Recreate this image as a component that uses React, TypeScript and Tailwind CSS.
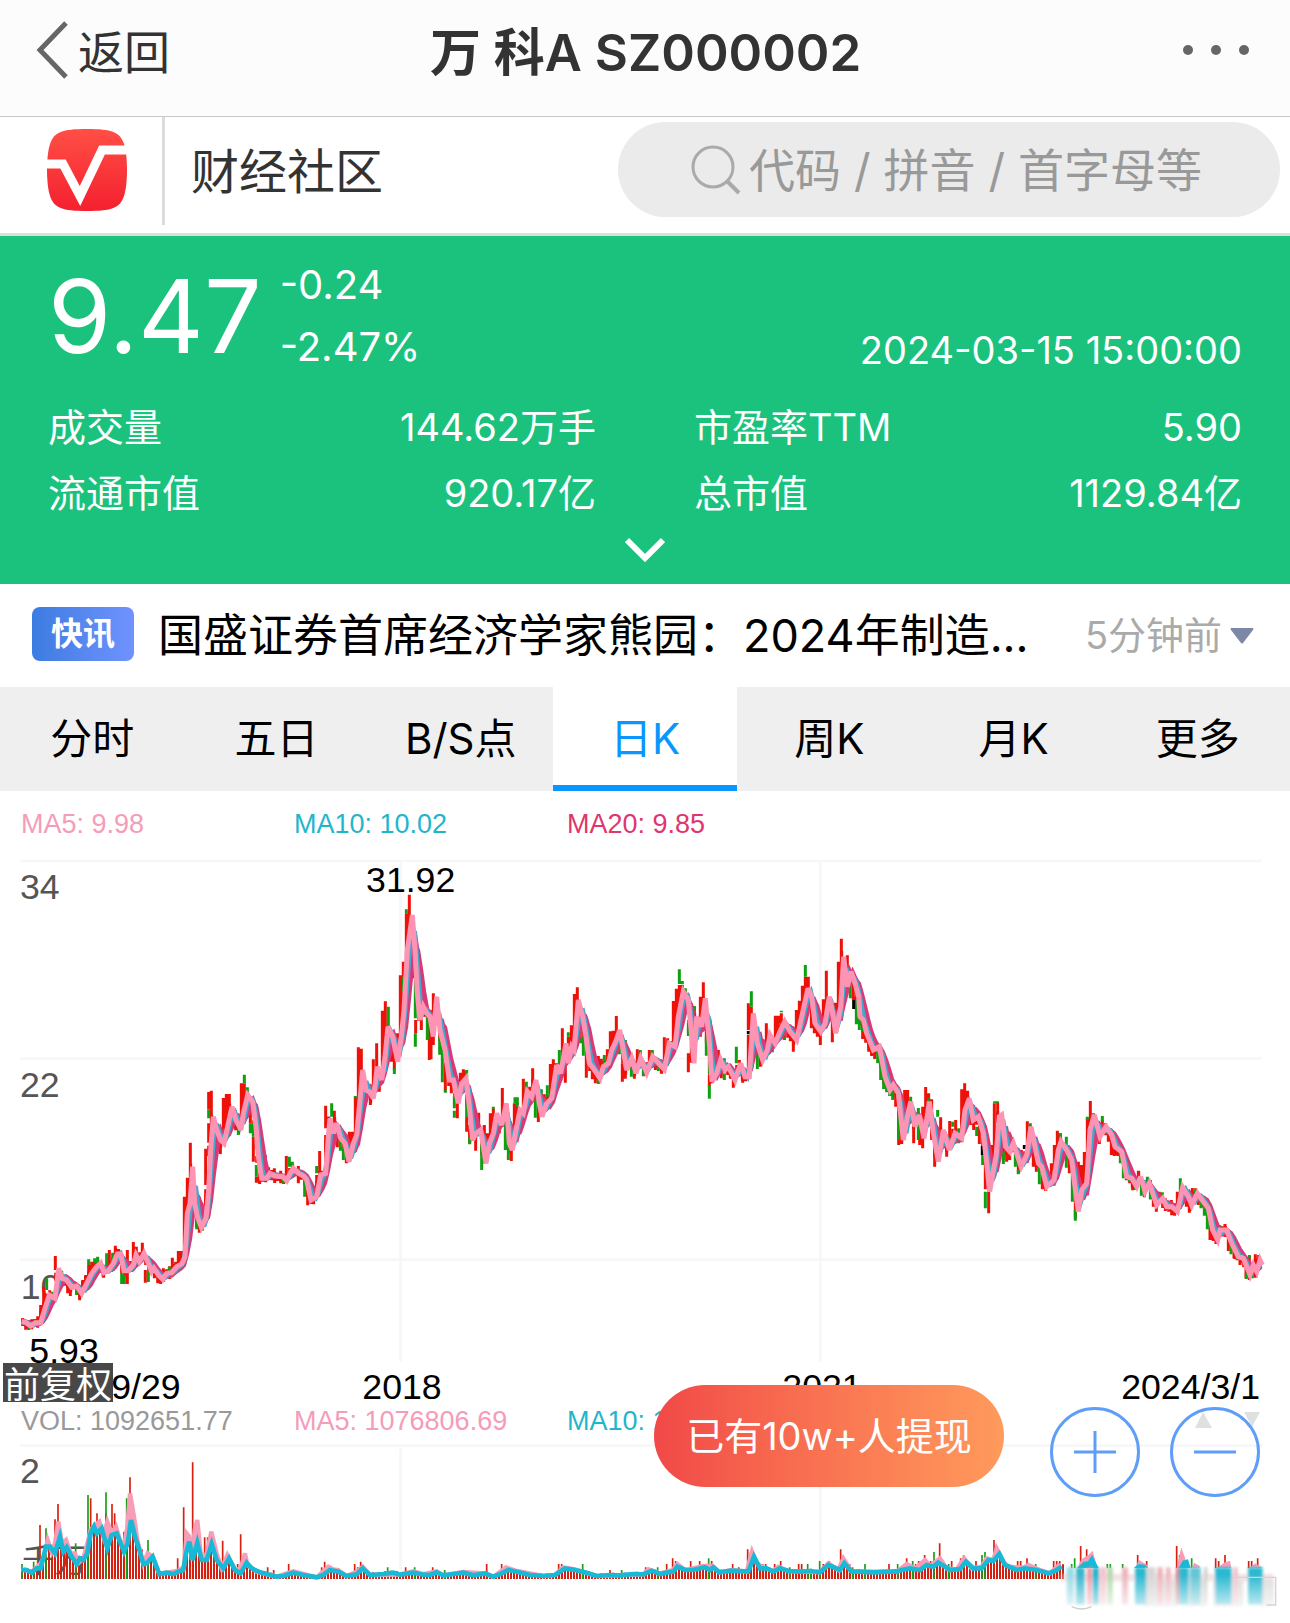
import { useState } from 'react';

type Point = [number, number];
type Bar = [number, number, number];

const SEGMENT_WIDTH = 1290;
const STEP = 9;
const VOLUME_BASE = 717;

// Each string covers one third of the time axis, x is relative to that third
function parse(segments: string[]): number[][] {
  return segments.flatMap((s, i) =>
    s.trim().split(/\s+/).map(item => {
      const [x, ...rest] = item.split(',').map(Number);
      return [x + i * SEGMENT_WIDTH, ...rest];
    })
  );
}

const priceLine = parse([
  '65,1415 78,1418 92,1428 106,1418 122,1418 135,1375 148,1335 165,1345 176,1255 186,1285 200,1290 215,1312 230,1308 245,1330 260,1300 275,1270 290,1250 302,1240 312,1268 325,1262 340,1240 352,1212 362,1212 372,1262 385,1262 400,1245 408,1215 418,1235 432,1210 445,1240 455,1265 462,1255 475,1275 488,1288 500,1270 515,1268 530,1250 545,1242 555,1220 562,1090 570,1060 578,950 584,1060 592,1100 604,1132 618,1105 626,1020 632,900 640,800 650,840 662,870 672,880 685,820 696,770 708,810 723,840 730,790 743,735 758,755 768,830 775,920 785,985 800,985 810,970 825,978 848,980 860,992 870,970 880,955 895,970 910,978 920,990 933,1050 950,1040 962,975 977,970 985,860 990,805 1000,850 1010,820 1022,865 1035,880 1047,935 1060,880 1070,855 1080,750 1088,660 1098,720 1108,725 1120,745 1132,650 1145,690 1155,620 1164,530 1178,560 1193,635 1204,560 1212,480 1222,300 1237,195 1245,300 1252,430 1260,510 1270,470 1280,490',
  '0,500 10,560 20,440 30,540 45,600 58,690 70,690 85,760 95,700 108,685 118,770 128,870 138,850 152,840 168,940 178,880 190,850 200,790 215,825 229,760 238,880 247,900 258,840 270,780 280,790 292,725 305,740 318,690 328,760 336,800 350,760 365,745 380,645 392,670 408,580 415,640 425,590 432,600 445,450 458,500 468,560 478,640 490,655 510,685 520,650 535,640 545,600 557,575 569,540 578,590 590,660 605,625 618,670 632,625 650,668 668,620 690,645 703,658 718,580 735,590 745,500 760,425 775,450 785,560 792,640 800,500 815,530 826,445 838,580 846,695 860,670 872,630 885,660 895,650 915,690 932,640 945,680 958,680 970,490 982,580 998,630 1012,600 1020,555 1035,580 1052,540 1064,515 1080,545 1100,570 1115,500 1134,415 1145,440 1155,520 1172,545 1185,520 1198,440 1208,490 1217,550 1232,470 1241,320 1252,410 1263,365 1275,400 1286,440',
  '0,500 10,510 20,550 40,600 58,590 75,680 90,720 100,705 115,730 130,870 142,800 152,755 165,830 178,795 192,865 208,755 220,850 235,935 250,840 268,900 285,850 305,865 315,780 328,745 340,810 355,800 370,850 380,940 389,1025 400,960 408,920 418,800 425,795 437,890 450,905 460,880 483,950 500,915 513,830 525,890 535,940 545,950 560,1010 582,990 595,900 603,875 620,900 635,930 645,1010 655,1085 665,1020 680,1000 690,840 703,795 720,860 738,830 755,855 765,890 785,905 800,980 815,985 830,1010 842,980 855,1025 868,1000 890,1065 908,1045 920,1070 935,1070 952,1085 968,1012 985,1040 995,1065 1012,1030 1030,1055 1045,1075 1058,1140 1073,1170 1080,1140 1100,1140 1115,1180 1135,1220 1150,1225 1170,1275 1180,1245 1190,1265 1200,1230 1207,1245',
]) as Point[];

const upCandles = parse([
  '68,1405,1425 122,1365,1425 131,1310,1390 149,1325,1360 166,1218,1260 203,1290,1330 211,1290,1338 239,1310,1345 248,1290,1320 257,1275,1320 266,1245,1290 275,1235,1280 284,1235,1270 309,1250,1280 328,1200,1260 346,1187,1240 382,1200,1302 400,1176,1240 409,1190,1250 427,1178,1230 436,1260,1298 463,1250,1285 482,1270,1298 490,1255,1280 517,1223,1265 535,1203,1240 544,1203,1240 553,1040,1220 562,983,1150 571,878,1090 598,1100,1148 617,896,1005 617,1018,1100 626,726,778 626,820,878 634,722,960 661,860,912 670,744,870 679,732,850 688,732,800 706,780,835 724,700,840 733,700,790 751,780,820 760,860,935 769,980,998 778,980,1000 796,915,980 823,955,975 859,918,980 895,948,1000 923,1020,1066 950,975,1030 959,903,1010 977,767,835 977,855,960 986,800,900 1003,782,850 1012,850,892 1039,900,940 1048,845,910 1057,845,890 1066,740,870 1075,592,820 1084,596,760 1111,720,765 1120,628,740 1130,580,680 1138,680,725 1147,482,690 1156,454,640 1174,560,635 1183,600,660 1192,550,620 1201,376,600 1210,335,520 1219,190,430 1228,134,330 1238,300,385 1247,510,550 1264,500,540 1273,440,500 1288,480,630',
  '3,480,628 10,430,585 46,640,725 64,700,730 82,740,805 91,668,740 100,658,720 108,662,690 110,800,845 119,840,880 137,850,902 146,788,850 163,825,940 172,850,890 181,790,880 190,775,860 208,800,850 217,714,830 244,830,933 253,760,870 262,760,830 280,686,780 299,710,745 308,655,740 325,760,816 343,733,780 361,642,740 370,628,700 379,640,700 388,650,700 397,535,630 406,600,698 415,560,600 424,526,590 433,432,610 442,412,560 469,540,683 487,650,688 496,660,700 505,618,690 514,626,670 532,598,650 541,544,640 550,542,600 559,498,580 577,640,695 586,650,686 613,650,686 622,598,650 649,640,670 658,600,650 676,640,660 694,645,670 703,562,640 730,453,590 739,416,560 748,405,500 757,405,430 775,610,667 784,560,635 793,470,560 811,440,560 820,397,500 829,470,580 838,675,710 847,640,700 865,600,640 874,640,685 901,650,685 910,670,713 928,630,660 937,670,692 955,460,540 955,555,680 964,470,600 991,600,650 1009,520,600 1036,497,570 1045,497,550 1054,490,520 1063,530,570 1081,540,574 1090,560,605 1099,480,560 1108,452,530 1117,407,500 1126,380,460 1135,380,430 1144,470,535 1153,520,550 1162,530,560 1171,540,585 1180,448,540 1189,362,500 1198,440,480 1207,500,577 1216,458,530 1225,335,500 1234,266,450 1252,316,420 1270,400,450 1279,440,480',
  '8,520,567 17,520,567 26,560,605 35,580,615 44,590,627 107,730,770 116,780,885 125,800,882 134,720,850 143,720,780 161,790,880 179,820,885 188,770,895 197,711,850 206,730,780 215,748,870 224,860,950 242,802,870 260,860,920 269,813,880 287,810,850 305,718,877 314,700,800 323,722,760 332,760,825 341,766,840 358,830,882 376,930,1018 386,1020,1090 394,885,980 403,760,950 413,757,820 430,860,930 440,830,935 449,850,930 475,920,970 484,900,955 502,814,900 520,860,950 529,900,965 547,960,1018 556,970,1018 574,940,990 583,885,960 592,842,930 601,850,890 628,930,970 646,1040,1105 655,935,1070 664,945,1030 673,906,1010 682,805,960 691,753,880 718,830,882 727,810,850 745,840,875 754,860,915 763,870,918 772,880,915 799,960,990 817,980,1015 835,963,1000 853,990,1042 871,990,1020 880,1030,1070 889,1040,1085 898,1025,1060 916,1045,1083 934,1050,1083 943,1060,1085 952,1025,1085 979,1030,1070 988,1040,1088 997,1014,1060 1015,1030,1065 1050,1110,1170 1059,1140,1172 1068,1150,1182 1086,1130,1150 1095,1122,1160 1105,1150,1203 1122,1190,1225 1140,1210,1245 1158,1230,1285 1168,1218,1290 1186,1213,1283 1195,1225,1250',
]) as Bar[];

const downCandles = parse([
  '86,1415,1440 104,1408,1420 140,1285,1320 158,1325,1350 185,1262,1290 230,1310,1335 266,1228,1245 284,1225,1240 293,1220,1240 320,1210,1260 338,1208,1240 365,1270,1302 373,1275,1302 445,1262,1296 454,1230,1250 508,1250,1262 590,1080,1138 607,1110,1142 626,778,805 652,822,850 715,830,855 733,674,700 742,712,740 751,820,850 760,820,860 769,945,980 796,970,990 850,980,998 868,920,950 877,935,955 914,990,1040 950,948,970 995,760,800 1021,860,902 1030,890,930 1066,738,745 1165,470,530 1183,655,672 1219,178,190 1210,380,425 1246,350,505 1246,550,590 1282,490,570',
  '29,560,614 37,590,697 46,720,728 73,740,775 73,782,803 110,660,680 110,750,803 119,860,883 155,850,960 190,770,776 226,820,900 235,850,930 255,742,760 262,742,770 289,695,730 316,740,803 334,718,760 352,706,740 388,600,650 415,547,560 451,540,580 460,560,617 505,690,702 523,615,640 568,560,613 586,570,610 604,640,680 631,600,625 640,655,678 667,600,620 685,645,663 748,358,402 757,393,403 766,415,440 775,520,558 793,468,480 829,560,617 838,620,672 838,705,746 883,625,660 883,670,690 919,590,640 946,670,690 964,424,470 982,600,657 1027,580,607 1054,482,487 1072,525,550 1063,560,570 1126,345,380 1261,380,445 1279,450,523 1288,500,540',
  '8,530,545 53,600,640 62,620,690 71,660,717 80,690,727 89,700,738 98,710,750 116,760,870 152,740,760 175,774,870 206,745,760 233,780,800 278,815,830 296,835,880 350,830,858 368,860,945 376,1025,1075 404,754,760 412,754,760 430,905,942 457,862,890 466,910,950 475,960,973 511,820,840 538,930,1003 565,965,985 601,850,870 619,860,953 637,940,1055 646,1080,1112 682,800,810 700,790,810 727,798,815 781,900,940 790,920,985 808,970,995 826,1000,1020 844,990,1037 862,980,1000 871,1000,1048 907,1027,1040 925,1055,1080 961,985,1030 1006,1018,1040 1023,1040,1075 1033,1060,1097 1042,1070,1138 1077,1128,1150 1113,1180,1213 1131,1205,1230 1168,1215,1225 1159,1270,1287 1177,1255,1285',
]) as Bar[];

const flatCandles: Bar[] = [[339, 1240, 1262], [2245, 543, 553], [2561, 450, 477], [2947, 888, 915], [3073, 885, 897]];

const volumeMa10 = parse([
  '65,690 80,690 95,698 110,685 122,685 138,620 150,620 165,640 180,590 190,635 200,622 215,650 230,672 240,655 250,660 262,640 272,580 282,560 290,580 305,565 322,625 335,585 350,580 372,635 383,610 393,540 405,590 418,630 430,672 440,670 458,650 478,702 500,698 520,702 535,695 550,690 558,640 568,605 578,660 592,608 605,660 620,660 635,612 650,660 670,685 687,655 705,690 722,700 740,668 755,685 775,695 800,702 830,710 850,708 880,698 910,705 950,712 970,705 990,690 1015,695 1040,708 1070,703 1088,685 1110,705 1150,702 1180,698 1200,704 1240,698 1270,704',
  '0,705 20,697 40,706 70,702 100,698 130,706 165,700 190,710 215,700 235,690 260,695 300,705 340,708 375,705 405,685 435,690 470,698 500,708 540,705 570,706 610,702 640,703 665,692 690,702 710,698 730,695 742,680 765,690 790,690 825,682 840,690 850,682 868,697 905,692 955,695 972,650 990,685 1010,685 1030,695 1050,685 1075,693 1110,695 1140,693 1170,697 1195,675 1230,690 1243,670 1265,695',
  '0,695 40,697 90,695 110,695 125,690 150,685 180,690 200,675 220,680 235,668 255,680 270,690 300,687 318,665 340,685 365,685 385,660 400,663 418,642 435,675 470,690 495,685 530,690 565,700 585,693 605,680',
]) as Point[];

const volumeMa5 = parse([
  '65,688 95,695 110,682 122,670 132,650 143,600 155,635 165,610 175,545 186,610 198,600 212,640 225,640 235,670 250,655 262,610 272,570 285,555 298,545 310,590 322,545 335,580 348,560 360,600 372,620 382,560 390,460 402,530 412,600 430,670 443,640 458,650 478,702 535,692 552,680 560,580 568,590 576,660 584,570 592,540 602,640 618,650 634,575 650,640 665,685 682,645 705,690 722,685 735,640 742,675 770,695 830,710 880,694 950,712 975,690 985,680 1000,688 1015,690 1040,708 1070,695 1088,680 1110,705 1200,704 1240,694 1270,702',
  '20,694 40,706 100,696 165,700 190,710 228,682 260,693 340,708 375,705 400,682 435,688 500,708 640,703 655,688 690,700 728,690 742,672 765,690 820,678 848,678 868,697 905,690 950,695 966,635 980,670 1000,682 1030,693 1045,680 1075,693 1170,697 1195,670 1225,690 1240,655 1265,695',
  '0,695 110,695 140,672 165,685 195,660 210,678 240,655 260,685 290,688 312,655 335,685 365,680 380,655 400,660 410,625 430,665 445,680 490,683 505,675 540,690 570,700 600,672',
]) as Point[];

const upVolume = parse([
  '120,555 165,538 174,492 272,475 291,520 318,520 336,492 344,520 372,575 390,412 426,628 533,655 551,502 578,367 614,592 623,592 632,575 668,602 713,672 722,583 803,682 821,690 866,672 965,682 974,665 1064,672 1073,682 1082,665 1217,682',
  '8,682 170,672 215,672 386,672 395,672 432,682 540,690 647,682 710,672 728,655 737,663 782,663 809,663 845,663 908,672 926,682 953,628 962,636 998,672 1007,672 1034,672 1052,663 1106,672 1115,672 1180,672 1198,663 1232,628 1259,672',
  '87,672 140,655 167,672 176,663 185,663 194,645 212,663 239,610 275,663 302,655 311,645 348,663 402,600 473,663 482,663 501,655 581,663 590,663 599,663 662,618 680,628 833,645 860,663 950,618 1067,655 1076,663 1095,645 1166,663 1175,663 1193,655',
]) as Point[];

const downVolume = parse([
  '66,672 101,665 138,565 227,610 264,465 318,457 380,475 444,600 1163,682 1244,682',
  '44,690 458,672 575,690 683,682 836,655 1079,682 1133,672 1142,690 1169,663 1268,682',
  '15,672 113,672 158,663 222,636 266,672 366,645 375,636 527,672 635,672 644,655 742,672 751,672 788,672 959,645 995,655',
]) as Point[];

function valueAt(points: Point[], x: number) {
  const i = points.findIndex(p => p[0] >= x);
  if (i < 0) return points[points.length - 1][1];
  if (i === 0) return points[0][1];
  const [x0, y0] = points[i - 1];
  const [x1, y1] = points[i];
  return y0 + ((y1 - y0) * (x - x0)) / (x1 - x0);
}

function toLine(points: Point[]) {
  return 'M' + points.map(([x, y]) => `${x} ${y.toFixed(0)}`).join('L');
}

function toBars(bars: Bar[]) {
  return bars.map(([x, top, bottom]) => `M${x} ${top.toFixed(0)}V${bottom.toFixed(0)}`).join('');
}

function trailingAverage(points: Point[], count: number): Point[] {
  const out: Point[] = [];
  for (let x = points[0][0]; x <= points[points.length - 1][0]; x += STEP) {
    let sum = 0;
    for (let k = 0; k < count; k++) sum += valueAt(points, x - k * STEP);
    out.push([x, sum / count]);
  }
  return out;
}

const bodies: Bar[] = [];
for (let x = 68; x < 3780; x += STEP) {
  const y = valueAt(priceLine, x + 6);
  bodies.push([x, y - 9 - ((x * 7) % 11), y + 9 + ((x * 5) % 13)]);
}

const volumeBodies: Bar[] = [];
for (let x = 66; x < 3190; x += STEP) {
  volumeBodies.push([x, valueAt(volumeMa10, x) - ((x * 7) % 14), VOLUME_BASE]);
}

// Area between the two volume averages
const volumeBand = toLine([...volumeMa5, ...[...volumeMa10].reverse()]) + 'Z';

const smudges = [
  { x: 3200, w: 22, c: '#9adbe6' }, { x: 3228, w: 26, c: '#38b7ce' }, { x: 3262, w: 12, c: '#ef8e98' },
  { x: 3277, w: 20, c: '#28b5cd' }, { x: 3300, w: 18, c: '#f5c3cc' }, { x: 3322, w: 16, c: '#b4d8ae' },
  { x: 3366, w: 18, c: '#edb6bf' }, { x: 3405, w: 34, c: '#2cb9d1' }, { x: 3440, w: 26, c: '#d5d5d5' },
  { x: 3472, w: 16, c: '#eeb0ba' }, { x: 3498, w: 14, c: '#efb7c0' }, { x: 3528, w: 8, c: '#e26a70' },
  { x: 3536, w: 30, c: '#2cb9d1' }, { x: 3570, w: 32, c: '#63c6d6' }, { x: 3612, w: 10, c: '#d0d0d0' },
  { x: 3645, w: 50, c: '#2cb9d1' }, { x: 3700, w: 14, c: '#f1c4cc' }, { x: 3744, w: 44, c: '#2cb9d1' },
];

const stats = [
  { label: '成交量', value: '144.62万手' },
  { label: '市盈率TTM', value: '5.90' },
  { label: '流通市值', value: '920.17亿' },
  { label: '总市值', value: '1129.84亿' },
];

const tabs = ['分时', '五日', 'B/S点', '日K', '周K', '月K', '更多'];

function Header() {
  return (
    <header className="h-[117px] bg-[#fcfcfc] border-b border-[#c8c8c8] grid grid-cols-3 items-center pb-3">
      <button className="flex items-center gap-[10px] pl-9 pb-1 text-[46px] leading-none text-[#333]">
        <svg className="w-8 h-[60px]" viewBox="0 0 32 60" fill="none" stroke="#666" strokeWidth="5">
          <path d="M30 3L4 30l26 27" />
        </svg>
        <span className="pt-1">返回</span>
      </button>
      <h1 className="text-[51px] leading-none font-semibold text-[#333] text-center whitespace-nowrap">万 科A SZ000002</h1>
      <button aria-label="更多操作" className="justify-self-end mr-10 pb-1">
        <svg className="w-[68px] h-3" viewBox="0 0 68 12" fill="#666">
          <circle cx="6" cy="6" r="5" />
          <circle cx="34" cy="6" r="5" />
          <circle cx="62" cy="6" r="5" />
        </svg>
      </button>
    </header>
  );
}

function Logo() {
  return (
    <svg className="w-[82px] h-[82px]" viewBox="0 0 82 82">
      <defs>
        <linearGradient id="logo" x1="0" y1="0" x2="0" y2="1">
          <stop offset="0" stopColor="#ff4f45" />
          <stop offset="1" stopColor="#f4202f" />
        </linearGradient>
      </defs>
      <path d="M41 0C66 0 74 3 78 15C82 27 82 55 78 67C74 79 66 82 41 82S8 79 4 67C0 55 0 27 4 15C8 3 16 0 41 0Z" fill="url(#logo)" />
      <path d="M1 35H17L34 67L56 21H80" fill="none" stroke="#fff" strokeWidth="9" strokeMiterlimit="10" />
    </svg>
  );
}

function SearchRow() {
  return (
    <div className="h-[119px] bg-white border-b-[3px] border-[#ddd] flex items-start">
      <a href="#" className="pl-[46px] pt-3 pr-[34px] shrink-0" aria-label="首页"><Logo /></a>
      <div className="w-[3px] h-[108px] bg-[#dcdcdc] shrink-0" />
      <span className="pl-[26px] h-[108px] leading-[110px] text-[48px] text-[#333] whitespace-nowrap">财经社区</span>
      <label className="ml-auto mr-[10px] mt-[5px] w-[662px] h-[95px] rounded-full bg-[#ebebeb] flex items-center gap-2 pl-[73px]">
        <svg className="w-[50px] h-[50px] shrink-0" viewBox="0 0 50 50" fill="none" stroke="#aaa" strokeWidth="3">
          <circle cx="22" cy="22" r="20" />
          <path d="M36 36l12 12" strokeWidth="4" />
        </svg>
        <input
          type="text"
          aria-label="搜索"
          placeholder="代码 / 拼音 / 首字母等"
          className="flex-1 min-w-0 pt-[2px] bg-transparent outline-none text-[46px] text-[#333] placeholder:text-[#999]"
        />
      </label>
    </div>
  );
}

function Quote() {
  return (
    <section className="h-[348px] bg-[#1bc27d] text-white px-12 pt-[18px] text-[38px]">
      <div className="flex h-[140px]">
        <span className="text-[102px] leading-[124px]">9.47</span>
        <div className="flex flex-col ml-[18px] text-[40px] leading-[62px]">
          <span>-0.24</span>
          <span>-2.47%</span>
        </div>
        <time className="ml-auto pt-[66px] leading-[60px]">2024-03-15 15:00:00</time>
      </div>
      <dl className="grid grid-cols-2 gap-x-[98px]">
        {stats.map(s => (
          <div key={s.label} className="flex justify-between leading-[66px]">
            <dt>{s.label}</dt>
            <dd>{s.value}</dd>
          </div>
        ))}
      </dl>
      <button aria-label="展开" className="block mx-auto mt-[10px]">
        <svg className="w-10 h-7" viewBox="0 0 40 28" fill="none" stroke="#fff" strokeWidth="6">
          <path d="M2 4l18 18L38 4" />
        </svg>
      </button>
    </section>
  );
}

function News() {
  return (
    <div className="h-[103px] bg-white flex items-center pl-8 pr-9 pb-[3px]">
      <span className="w-[102px] h-[54px] rounded-lg bg-linear-to-r from-[#3b7ce0] to-[#7092ff] text-white text-[32px] leading-[54px] font-bold text-center shrink-0">
        快讯
      </span>
      <a href="#" className="ml-6 pt-[3px] text-[45px] leading-none text-black whitespace-nowrap">国盛证券首席经济学家熊园：2024年制造...</a>
      <button className="ml-auto pt-[3px] flex items-center gap-2 text-[38px] text-[#aaa] whitespace-nowrap">
        5分钟前
        <svg className="w-6 h-4" viewBox="0 0 24 16"><path d="M1 0h22q1 0 0 2L13 15q-1 1-2 0L1 2Q0 0 1 0Z" fill="#7d88a6" /></svg>
      </button>
    </div>
  );
}

function PriceChart() {
  return (
    <svg className="block w-full" viewBox="0 0 3870 1680" fill="none" fontFamily="Liberation Sans, Arial, sans-serif" fontSize="107">
      <path d="M60 33H3786M60 626H3786M60 1229H3786M1202 33V1536M2461 33V1536" stroke="#f7f7f7" strokeWidth="8" />
      <g fill="#555">
        <text x="60" y="146">34</text>
        <text x="60" y="742">22</text>
        <text x="62" y="1347">10</text>
      </g>
      <g strokeWidth="9">
        <path d={toBars(bodies)} stroke="#e8150c" />
        <path d={toBars(upCandles)} stroke="#ee1108" />
        <path d={toBars(downCandles)} stroke="#0fa012" />
        <path d={toBars(flatCandles)} stroke="#000" />
      </g>
      <g strokeWidth="15" strokeLinejoin="miter" strokeMiterlimit="3">
        <path d={toLine(trailingAverage(priceLine, 4))} stroke="#d93a77" />
        <path d={toLine(trailingAverage(priceLine, 3))} stroke="#d93a77" />
        <path d={toLine(trailingAverage(priceLine, 2))} stroke="#3fa9cc" />
        <path d={toLine(priceLine)} stroke="#ff93b3" />
      </g>
      <g fill="#000">
        <text x="1232" y="126" textAnchor="middle">31.92</text>
        <text x="88" y="1540">5.93</text>
        <text x="66" y="1648">2015/9/29</text>
        <text x="1206" y="1648" textAnchor="middle">2018</text>
        <text x="2466" y="1648" textAnchor="middle">2021</text>
        <text x="3780" y="1648" textAnchor="end">2024/3/1</text>
      </g>
    </svg>
  );
}

function VolumeChart() {
  return (
    <svg className="block w-full" viewBox="0 276 3870 573" fill="none" fontFamily="Liberation Sans, Noto Sans CJK SC, sans-serif" fontSize="107">
      <defs>
        <filter id="soft" x="-5%" y="-20%" width="110%" height="140%"><feGaussianBlur stdDeviation="4" /></filter>
        <linearGradient id="fade" x1="0" y1="0" x2="0" y2="1">
          <stop offset="0" stopColor="#fff" />
          <stop offset="0.300" stopColor="#fff" />
          <stop offset="1" stopColor="#fff" stopOpacity="0.200" />
        </linearGradient>
        <mask id="fadeMask" maskUnits="userSpaceOnUse" x="3150" y="660" width="720" height="150">
          <rect x="3150" y="660" width="720" height="150" fill="url(#fade)" />
        </mask>
      </defs>
      <path d="M60 317H3786M1202 325V717M2461 325V717" stroke="#f7f7f7" strokeWidth="8" />
      <text x="60" y="428" fill="#555">2</text>
      <text x="66" y="697" fill="#555" fontSize="98">千万</text>
      <g strokeWidth="6">
        <path d={toBars(volumeBodies)} stroke="#cf2213" />
        <path d={toBars(upVolume.map(([x, y]) => [x, y, x > 3200 ? 685 : VOLUME_BASE]))} stroke="#d8200f" strokeWidth="5" />
        <path d={toBars(downVolume.map(([x, y]) => [x, y, x > 3200 ? 685 : VOLUME_BASE]))} stroke="#1b9c1b" strokeWidth="5" />
      </g>
      <path d={volumeBand} fill="#f79db8" />
      <g strokeWidth="13">
        <path d={toLine(volumeMa5)} stroke="#f79db8" />
        <path d={toLine(volumeMa10)} stroke="#16b9d6" strokeWidth="14" />
      </g>
      <g fill="#f79db8">
        <path d="M3232 684l12-26 22-14 12-12 12 44v8zM3405 684l12-24 24 14v10zM3530 684l14-62 14 40v22zM3575 684l8-16 16 10v6zM3652 684l20-16 18-6 4 22zM3748 684l18-14 22 14z" />
      </g>
      <path d="M3232 684l18-18 14-2 12-20 20 40zM3402 684l14-12 20 2 8 10zM3536 684l12-22 16-4 8 26z" fill="#16b9d6" />
      <g mask="url(#fadeMask)">
        <g filter="url(#soft)">
          <rect x="3180" y="702" width="640" height="22" fill="#e3c6c6" opacity="0.500" />
          <path d="M3430 720h100v80h-100zM3560 720h60v80h-60zM3640 720h90v80h-90zM3780 720h42v80h-42z" fill="#ddd" />
          {smudges.map(s => (
            <rect key={s.x} x={s.x} y="682" width={s.w} height="112" fill={s.c} />
          ))}
        </g>
      </g>
      <path d="M3700 712H3827V795H3800" stroke="#d4d4d4" strokeWidth="4" />
      <path d="M3215 800q30 14 60 0" stroke="#cfcfcf" strokeWidth="4" />
    </svg>
  );
}

function ChartPanel() {
  return (
    <section className="relative bg-white font-['Liberation_Sans',Arial,sans-serif] text-[27px]">
      <div className="h-[59px] leading-[66px] pl-[21px] flex">
        <span className="w-[273px] text-[#f59cb9]">MA5: 9.98</span>
        <span className="w-[273px] text-[#1fb6cc]">MA10: 10.02</span>
        <span className="w-[273px] text-[#e0366f]">MA20: 9.85</span>
      </div>
      <PriceChart />
      <div className="h-[22px] leading-[22px] pl-[21px] flex whitespace-nowrap">
        <span className="w-[273px] text-[#999]">VOL: 1092651.77</span>
        <span className="w-[273px] text-[#f59cb9]">MA5: 1076806.69</span>
        <span className="w-[273px] text-[#1fb6cc]">MA10: 1184093.52</span>
      </div>
      <VolumeChart />

      <button className="absolute left-[3px] top-[572px] h-[39px] bg-[#484848] text-white text-[36px] leading-[44px] px-px font-[Inter,'Noto_Sans_CJK_SC',sans-serif] overflow-hidden">
        前复权
      </button>
      <svg className="absolute right-[30px] top-[621px] w-[65px] h-4" viewBox="0 0 65 16" fill="#e0e0e0">
        <path d="M0 16L8 0l9 16zM49 0h16l-8 15z" />
      </svg>
      <button className="absolute right-[286px] top-[594px] w-[350px] h-[102px] rounded-full bg-linear-to-r from-[#f14848] to-[#ff9a5c] text-white text-[38px] font-[Inter,'Noto_Sans_CJK_SC',sans-serif]">
        已有10w+人提现
      </button>
      <div className="absolute right-[30px] top-[616px] flex gap-[30px]">
        <button aria-label="放大">
          <svg className="w-[90px] h-[90px]" viewBox="0 0 90 90" fill="none" stroke="#5e9ef8" strokeWidth="3">
            <circle cx="45" cy="45" r="43.500" />
            <path d="M24 45h42M45 24v42" />
          </svg>
        </button>
        <button aria-label="缩小">
          <svg className="w-[90px] h-[90px]" viewBox="0 0 90 90" fill="none" stroke="#5e9ef8" strokeWidth="3">
            <circle cx="45" cy="45" r="43.500" />
            <path d="M24 45h42" />
          </svg>
        </button>
      </div>
    </section>
  );
}

export default function App() {
  const [active, setActive] = useState('日K');

  return (
    <div className="bg-white overflow-hidden font-[Inter,'Noto_Sans_CJK_SC',sans-serif]">
      <Header />
      <SearchRow />
      <Quote />
      <News />
      <nav className="grid grid-cols-7 h-[104px] bg-[#efefef] text-[42px]">
        {tabs.map(t => (
          <button
            key={t}
            onClick={() => setActive(t)}
            className={`pt-1 border-b-[6px] ${
              active === t ? 'bg-white text-[#0a96ff] border-b-[#0a96ff]' : 'text-black border-b-transparent'
            }`}
          >
            {t}
          </button>
        ))}
      </nav>
      <ChartPanel />
    </div>
  );
}
